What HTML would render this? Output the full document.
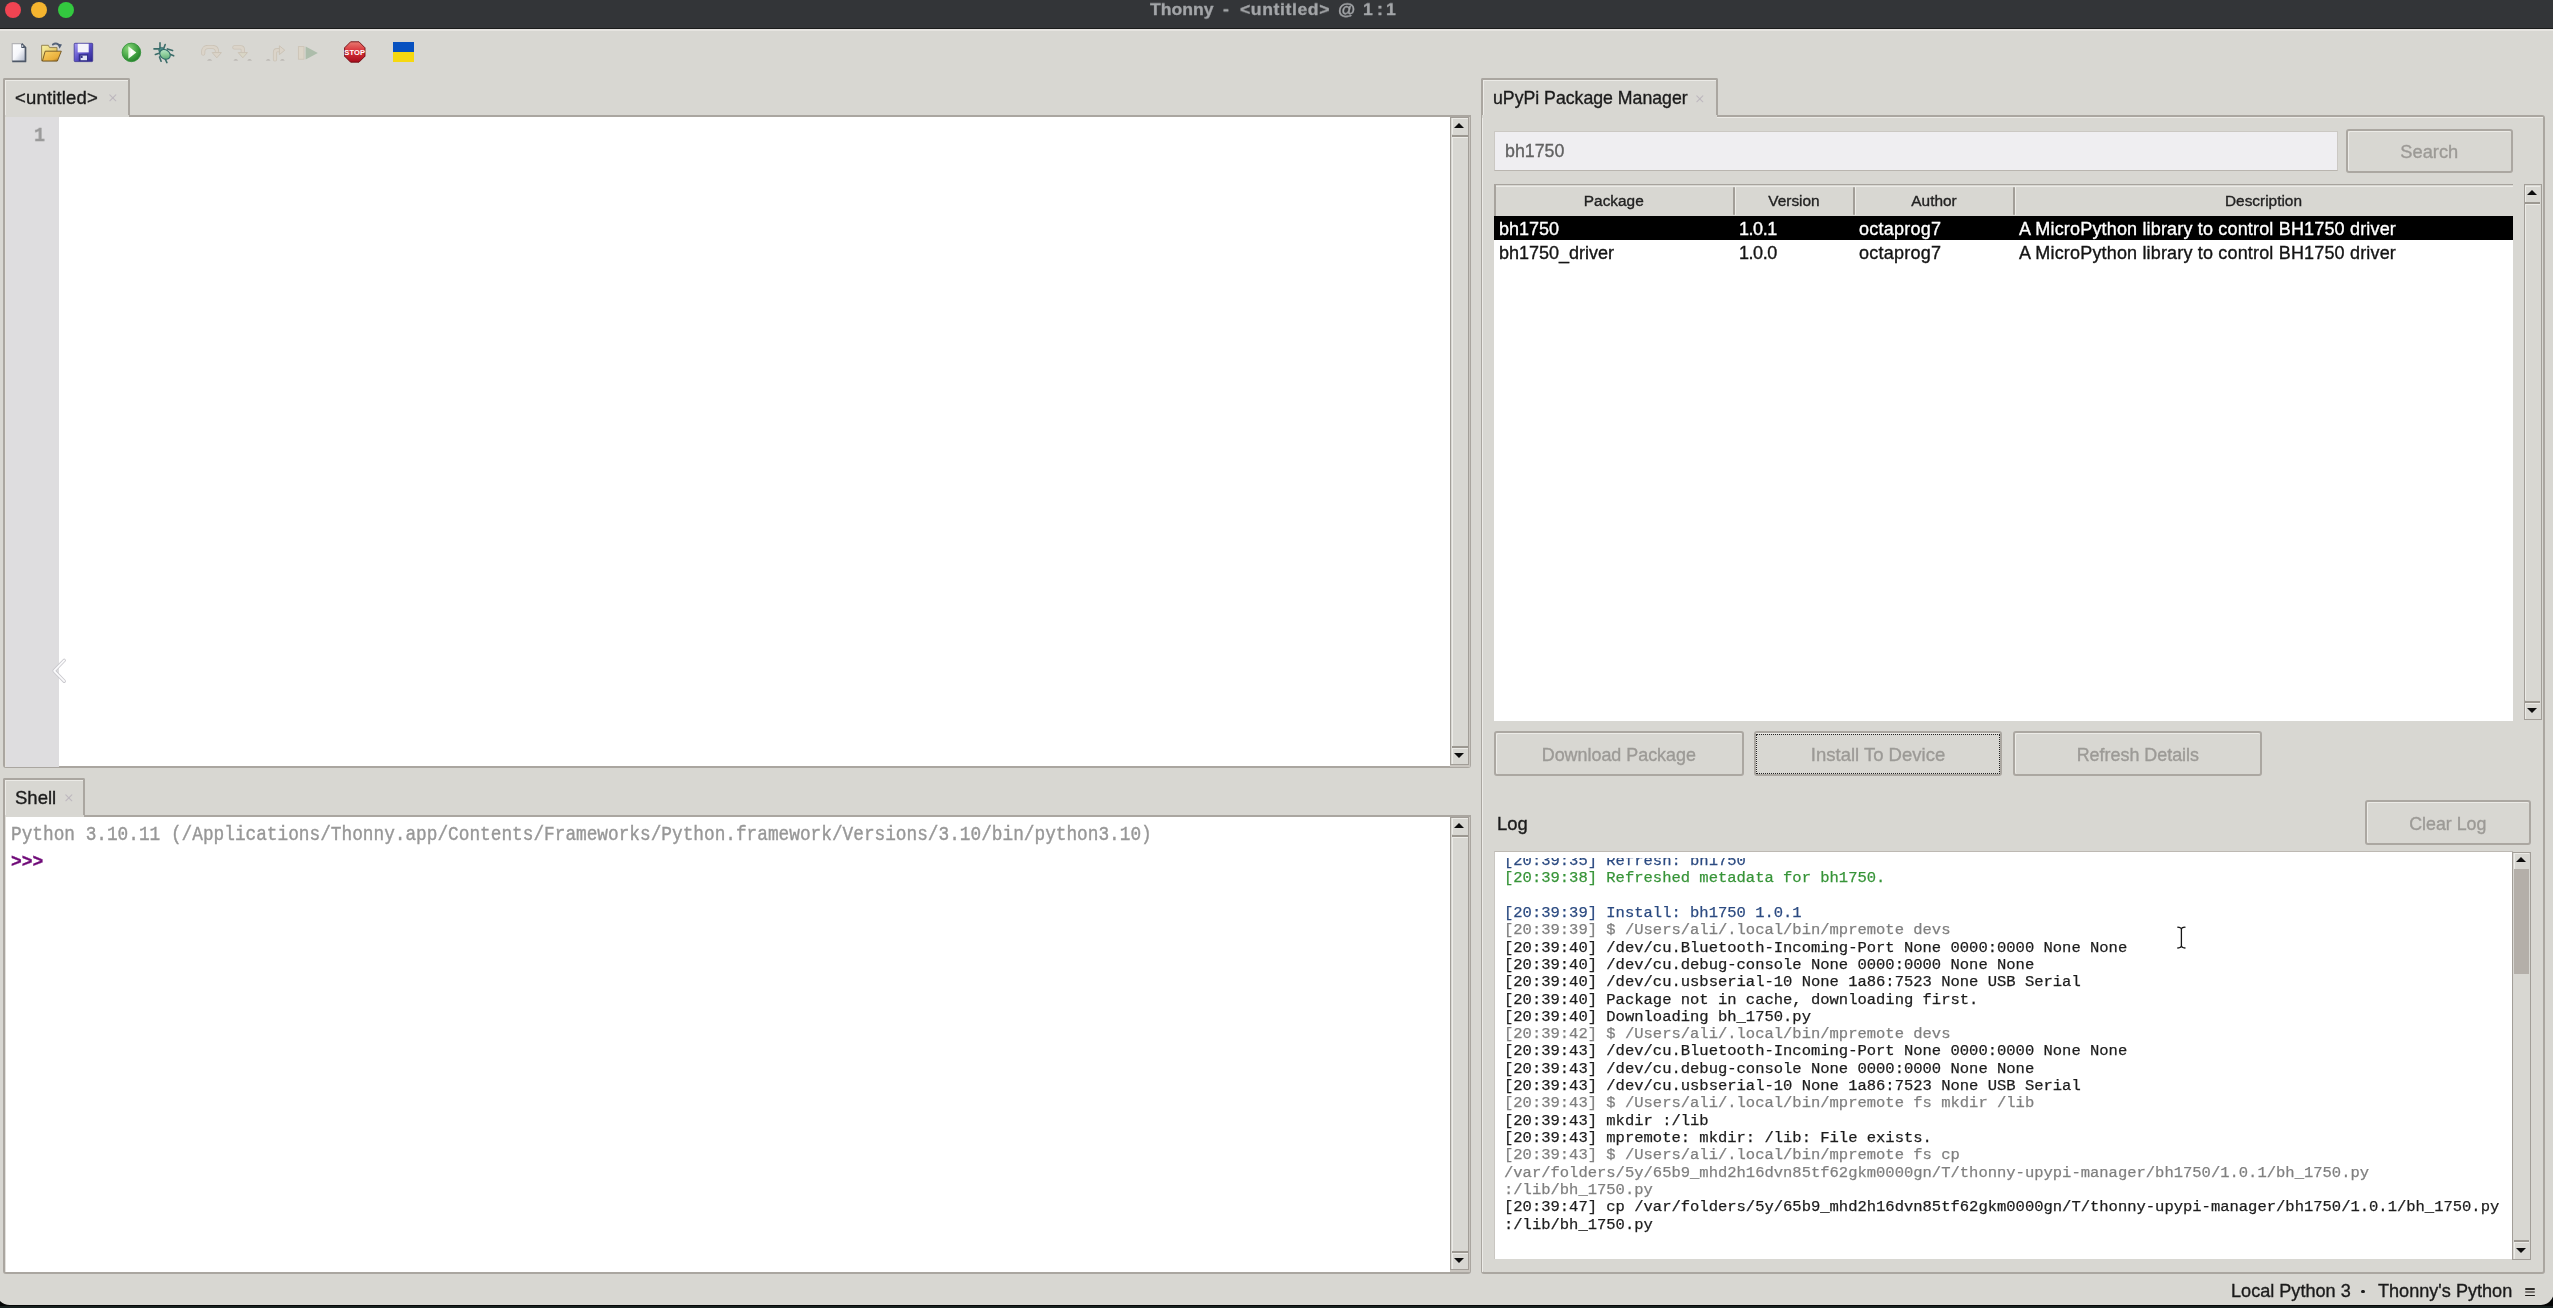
<!DOCTYPE html>
<html><head><meta charset="utf-8">
<style>
*{margin:0;padding:0;box-sizing:border-box}
html,body{width:2553px;height:1308px;overflow:hidden;background:linear-gradient(#050606 0,#050606 1306.5px,#17201f 1306.5px)}
body{font-family:"Liberation Sans",sans-serif;position:relative}
.a{position:absolute}
.t{white-space:pre;line-height:normal;will-change:transform;-webkit-text-stroke:0.35px currentColor}
.mono{font-family:"Liberation Mono",monospace}
#win{position:absolute;left:0;top:0;width:2553px;height:1304.9px;background:#d8d7d2;overflow:hidden}
.sbb{background:#d8d7d2;border-top:1px solid #ecebe7;border-left:1px solid #ecebe7}
.ll{height:17.32px;white-space:pre;-webkit-text-stroke:0.25px currentColor}
.g{color:#7f7f7f}.gr{color:#379438}.bl{color:#2b4a80}.d{color:#1c1c1c}
</style></head><body>
<div id="win">

<div class="a" style="left:0;top:0;width:2553px;height:27.6px;background:#333538"></div>
<div class="a" style="left:0;top:27.6px;width:2553px;height:1.8px;background:#1a1b1b"></div>
<div class="a" style="left:0;top:29.4px;width:2553px;height:1.5px;background:#e6e4e0"></div>
<div class="a" style="left:4.6px;top:1.9px;width:16.2px;height:16.2px;border-radius:50%;background:#f04452"></div>
<div class="a" style="left:30.9px;top:1.9px;width:16.2px;height:16.2px;border-radius:50%;background:#f5b52f"></div>
<div class="a" style="left:57.9px;top:1.9px;width:16.2px;height:16.2px;border-radius:50%;background:#33c93f"></div>
<div class="a t" style="left:1150px;top:-0.6px;font-weight:bold;font-size:17.6px;transform:scaleY(0.9);transform-origin:0 15.8px;color:#a3a5a8">Thonny</div>
<div class="a t" style="left:1223px;top:-0.6px;font-weight:bold;font-size:17.6px;transform:scaleY(0.9);transform-origin:0 15.8px;color:#a3a5a8">-</div>
<div class="a t" style="left:1239.5px;top:-0.6px;font-weight:bold;font-size:17.6px;transform:scaleY(0.9);transform-origin:0 15.8px;letter-spacing:0.6px;color:#a3a5a8">&lt;untitled&gt;</div>
<div class="a t" style="left:1338px;top:-0.6px;font-weight:bold;font-size:17.6px;transform:scaleY(0.9);transform-origin:0 15.8px;color:#a3a5a8">@</div>
<div class="a t" style="left:1362.5px;top:-0.6px;font-weight:bold;font-size:17.6px;transform:scaleY(0.9);transform-origin:0 15.8px;color:#a3a5a8">1</div>
<div class="a t" style="left:1376.7px;top:-0.6px;font-weight:bold;font-size:17.6px;transform:scaleY(0.9);transform-origin:0 15.8px;color:#a3a5a8">:</div>
<div class="a t" style="left:1385.5px;top:-0.6px;font-weight:bold;font-size:17.6px;transform:scaleY(0.9);transform-origin:0 15.8px;color:#a3a5a8">1</div>

<svg class="a" style="left:10px;top:42px" width="18" height="21" viewBox="0 0 18 21">
 <defs><linearGradient id="nf" x1="0" y1="0" x2="1" y2="1"><stop offset="0" stop-color="#ffffff"/><stop offset="0.5" stop-color="#f6f7fb"/><stop offset="1" stop-color="#aab3c6"/></linearGradient></defs>
 <path d="M2.2 1.6H11.6L15.6 5.6V19.4H2.2Z" fill="url(#nf)"/>
 <path d="M2.2 19.2V1.6H11.4" fill="none" stroke="#b3b3b6" stroke-width="1.1"/>
 <path d="M11.6 1.6L15.5 5.5V19.4H2.2" fill="none" stroke="#4d5767" stroke-width="1.7" stroke-linejoin="round"/>
 <path d="M11.2 1.8L15.3 5.9L11.4 5.9Z" fill="#4a5566"/>
 <circle cx="12.6" cy="4.1" r="0.8" fill="#e8ecf4"/>
</svg>
<svg class="a" style="left:40px;top:42px" width="24" height="21" viewBox="0 0 24 21">
 <defs><linearGradient id="of" x1="0" y1="0" x2="1" y2="1"><stop offset="0" stop-color="#f8f2a4"/><stop offset="1" stop-color="#d9b24a"/></linearGradient>
 <linearGradient id="of2" x1="0" y1="0" x2="1" y2="1"><stop offset="0" stop-color="#fbd466"/><stop offset="0.7" stop-color="#e9ae3a"/><stop offset="1" stop-color="#8a5a16"/></linearGradient></defs>
 <path d="M1.6 3.3H8.3L9.6 5.6H17V18.8H1.6Z" fill="url(#of)" stroke="#8d7a4a" stroke-width="0.9"/>
 <path d="M5.2 9.2H21.3L17.4 19H2.4Z" fill="url(#of2)" stroke="#6e5220" stroke-width="0.9"/>
 <path d="M12.9 2.6C14.6 1.2 16.8 1.2 18.4 2.6" fill="none" stroke="#56647a" stroke-width="1.9" stroke-linecap="round"/>
 <path d="M17.2 1.6L22 2.4L19.6 6.8Z" fill="#4f5e76"/>
</svg>
<svg class="a" style="left:73px;top:42px" width="21" height="21" viewBox="0 0 21 21">
 <defs><linearGradient id="sv" x1="0" y1="0" x2="1" y2="1"><stop offset="0" stop-color="#a89cf6"/><stop offset="0.5" stop-color="#5b50c8"/><stop offset="1" stop-color="#2b238c"/></linearGradient></defs>
 <rect x="1.2" y="1.3" width="18.5" height="18.3" rx="0.8" fill="url(#sv)" stroke="#3d3690" stroke-width="0.8"/>
 <rect x="4.7" y="1.8" width="11" height="8.6" fill="#f4f3fb"/>
 <rect x="5.8" y="12.2" width="9.4" height="7" fill="#33308a"/>
 <rect x="7.6" y="13.6" width="6.4" height="4.6" fill="#dfe3f4"/>
 <rect x="7.6" y="13.6" width="2" height="2.4" fill="#33308a"/>
</svg>
<svg class="a" style="left:121px;top:42px" width="21" height="21" viewBox="0 0 21 21">
 <defs><radialGradient id="rn" cx="0.35" cy="0.3" r="0.75"><stop offset="0" stop-color="#8ad67a"/><stop offset="0.6" stop-color="#44a444"/><stop offset="1" stop-color="#23802a"/></radialGradient>
 <linearGradient id="rt" x1="0" y1="0" x2="1" y2="0"><stop offset="0" stop-color="#d8f8d0"/><stop offset="0.4" stop-color="#ffffff"/><stop offset="1" stop-color="#f0fbe8"/></linearGradient></defs>
 <circle cx="10.4" cy="10.4" r="9.3" fill="url(#rn)" stroke="#2e8f36" stroke-width="0.8"/>
 <path d="M7.3 4.2L15.3 10.4L7.3 16.8Z" fill="url(#rt)"/>
</svg>
<svg class="a" style="left:152px;top:41px" width="24" height="24" viewBox="0 0 24 24">
 <defs><linearGradient id="bg1" x1="0" y1="0" x2="1" y2="1"><stop offset="0" stop-color="#c8ecd8"/><stop offset="0.5" stop-color="#8fcf9c"/><stop offset="1" stop-color="#4c9a6a"/></linearGradient></defs>
 <g stroke="#3b6c69" stroke-width="1.6" stroke-linecap="round" fill="none">
  <path d="M8 1.9V7.9"/><path d="M13.2 3.5L11.9 7.1"/><path d="M2 7.9H7.8"/><path d="M3.4 13.4L7.8 12"/>
  <path d="M15.4 7.9L20.6 9.6"/><path d="M17.4 13.1L21.7 14.8"/><path d="M7.5 15.9L9.1 20.3"/><path d="M13.2 18L14.9 21.6"/>
 </g>
 <circle cx="9.6" cy="9.2" r="2.8" fill="#4a8a86" stroke="#2f6664" stroke-width="0.8"/>
 <ellipse cx="13" cy="13.4" rx="5.6" ry="4.5" transform="rotate(35 13 13.4)" fill="url(#bg1)" stroke="#2e6a68" stroke-width="1.1"/>
</svg>
<svg class="a" style="left:200px;top:45.3px" width="24" height="17" viewBox="0 0 24 17">
 <path d="M3.2 8.6V6.8C3.2 3.6 5.2 2 8 2H12.4C15.6 2 17 3.6 17 6.8V8" fill="none" stroke="#cbc3b6" stroke-width="4.2" stroke-linecap="round"/>
 <path d="M3.2 8.6V6.8C3.2 3.6 5.2 2 8 2H12.4C15.6 2 17 3.6 17 6.8V8" fill="none" stroke="#dbd4c9" stroke-width="2.6" stroke-linecap="round"/>
 <path d="M12.2 7.6H21.4L16.8 12.8Z" fill="#dbd4c9" stroke="#cbc3b6" stroke-width="1" stroke-linejoin="round"/>
 <path d="M7 15.6Q9.6 12.8 12.2 15.6Z" fill="#b2aea9"/>
</svg>
<svg class="a" style="left:232px;top:45.3px" width="24" height="17" viewBox="0 0 24 17">
 <path d="M2.4 2.4H8.6C10 2.4 10.8 3.2 10.8 4.6V8" fill="none" stroke="#cbc3b6" stroke-width="4.2" stroke-linecap="round"/>
 <path d="M2.4 2.4H8.6C10 2.4 10.8 3.2 10.8 4.6V8" fill="none" stroke="#dbd4c9" stroke-width="2.6" stroke-linecap="round"/>
 <path d="M6.2 7.6H15.4L10.8 12.8Z" fill="#d9d6c6" stroke="#cbc3b6" stroke-width="1" stroke-linejoin="round"/>
 <path d="M1.4 15.6Q3.8 12.8 6.2 15.6Z" fill="#b2aea9"/>
 <path d="M15.2 15.6Q17.6 12.8 20 15.6Z" fill="#b2aea9"/>
</svg>
<svg class="a" style="left:264px;top:45.3px" width="24" height="17" viewBox="0 0 24 17">
 <path d="M11 14.4V7.4C11 6 11.8 5.2 13.2 5.2H16" fill="none" stroke="#cbc3b6" stroke-width="4.2" stroke-linecap="round"/>
 <path d="M11 14.4V7.4C11 6 11.8 5.2 13.2 5.2H16" fill="none" stroke="#dbd4c9" stroke-width="2.6" stroke-linecap="round"/>
 <path d="M15.4 0.8L20.8 5.2L15.4 9.6Z" fill="#dbd4c9" stroke="#cbc3b6" stroke-width="1" stroke-linejoin="round"/>
 <path d="M1.8 15.6Q4.2 12.8 6.6 15.6Z" fill="#b2aea9"/>
 <path d="M16 15.6Q18.4 12.8 20.8 15.6Z" fill="#b2aea9"/>
</svg>
<svg class="a" style="left:297px;top:44.6px" width="22" height="16" viewBox="0 0 22 16">
 <rect x="1.4" y="1.6" width="5.6" height="12.6" fill="#dcd5c8" stroke="#ccc4b6" stroke-width="0.9"/>
 <path d="M8.6 1.4L20.8 7.9L8.6 14.4Z" fill="#adbdab"/>
</svg>
<svg class="a" style="left:343px;top:40px" width="24" height="24" viewBox="0 0 24 24">
 <defs><linearGradient id="st" x1="0" y1="0" x2="0" y2="1"><stop offset="0" stop-color="#e87a70"/><stop offset="0.45" stop-color="#d8333a"/><stop offset="1" stop-color="#a80d1c"/></linearGradient></defs>
 <path d="M7.6 1.8H16L22 7.8V16.2L16 22.2H7.6L1.6 16.2V7.8Z" fill="url(#st)" stroke="#6e0b12" stroke-width="0.9"/>
 <text x="11.8" y="14.6" text-anchor="middle" font-family="Liberation Sans" font-weight="bold" font-size="7.6" fill="#fff" letter-spacing="0.1">STOP</text>
</svg>
<div class="a" style="left:392.9px;top:41.8px;width:21.1px;height:10.4px;background:#0751c0"></div>
<div class="a" style="left:392.9px;top:52.2px;width:21.1px;height:10.3px;background:#f6d80f"></div>

<div class="a" style="left:3.0px;top:78px;width:126.8px;height:39px;background:#d8d7d2;border:2px solid #aaa6a0;border-bottom:none;border-radius:2px 2px 0 0"></div>
<div class="a" style="left:5.0px;top:80px;width:122.8px;height:37px;border-left:1px solid #ecebe7;border-top:1px solid #ecebe7"></div>
<div class="a t" style="left:15.3px;top:87.0px;font-size:18.5px;color:#1b1b1b"><span style='letter-spacing:0.17px'>&lt;untitled&gt;</span></div>
<svg class="a" style="left:108.8px;top:93.9px" width="8" height="8" viewBox="0 0 8 8"><path d="M0.8 0.8L6.8 6.8M6.8 0.8L0.8 6.8" stroke="#b5aeb8" stroke-width="1.05" stroke-linecap="round" opacity="0.75"/></svg>
<div class="a" style="left:3.0px;top:115.3px;width:1468.2px;height:653px;border:2px solid #aaa6a0;border-radius:0 0 3px 3px;background:#fff"></div>
<div class="a" style="left:4.8px;top:116.8px;width:1.1px;height:650px;background:#e3e1dd"></div>
<div class="a" style="left:4.8px;top:115px;width:124px;height:2.4px;background:#d8d7d2"></div>
<div class="a" style="left:5.9px;top:117.3px;width:52.9px;height:649.5px;background:#dedddf"></div>
<div class="a t mono" style="left:34px;top:124.4px;font-size:20.8px;font-weight:bold;color:#9a9a9a;transform:scaleX(0.88);transform-origin:0 0">1</div>
<div class="a" style="left:1450.2px;top:116.8px;width:19.8px;height:650.3px;background:#c9c5bf"></div>
<div class="a" style="left:1450.2px;top:117px;width:18.7px;height:648.3px;background:#d8d7d2;border:1.3px solid #a29e98"></div>
<div class="a" style="left:1451.5px;top:118.3px;width:16.099999999999998px;height:16.2px;border-top:1px solid #ecebe7;border-left:1px solid #ecebe7"></div>
<div class="a" style="left:1451.5px;top:747.8px;width:16.099999999999998px;height:16.2px;border-top:1px solid #ecebe7;border-left:1px solid #ecebe7"></div>
<div class="a" style="left:1453.75px;top:122.55000000000001px;width:0;height:0;border-left:5px solid transparent;border-right:5px solid transparent;border-bottom:5.7px solid #0d0d0d"></div>
<div class="a" style="left:1453.75px;top:753.15px;width:0;height:0;border-left:5px solid transparent;border-right:5px solid transparent;border-top:5.7px solid #0d0d0d"></div>
<div class="a" style="left:1451.5px;top:134.5px;width:16.099999999999998px;height:2px;background:#9c9891"></div>
<div class="a" style="left:1451.5px;top:745.8px;width:16.099999999999998px;height:2px;background:#9c9891"></div>
<div class="a" style="left:1451.5px;top:136.5px;width:16.099999999999998px;height:609.3px;border-top:1px solid #ecebe7;border-left:1px solid #ecebe7"></div>
<div class="a" style="left:3.0px;top:778px;width:82.3px;height:39px;background:#d8d7d2;border:2px solid #aaa6a0;border-bottom:none;border-radius:2px 2px 0 0"></div>
<div class="a" style="left:5.0px;top:780px;width:78.3px;height:37px;border-left:1px solid #ecebe7;border-top:1px solid #ecebe7"></div>
<div class="a t" style="left:15px;top:787.2px;font-size:18.5px;color:#1b1b1b">Shell</div>
<svg class="a" style="left:64.8px;top:793.7px" width="8" height="8" viewBox="0 0 8 8"><path d="M0.8 0.8L6.8 6.8M6.8 0.8L0.8 6.8" stroke="#b5aeb8" stroke-width="1.05" stroke-linecap="round" opacity="0.75"/></svg>
<div class="a" style="left:3.0px;top:815.3px;width:1468.2px;height:458.5px;border:2px solid #aaa6a0;border-radius:0 0 3px 3px;background:#fff"></div>
<div class="a" style="left:4.8px;top:816.8px;width:1.1px;height:455.5px;background:#e3e1dd"></div>
<div class="a" style="left:4.8px;top:815px;width:79.5px;height:2.4px;background:#d8d7d2"></div>
<div class="a t mono" style="left:11.3px;top:825.3px;font-size:17.78px;color:#979797;transform:scaleY(1.1);transform-origin:0 14.8px">Python 3.10.11 (/Applications/Thonny.app/Contents/Frameworks/Python.framework/Versions/3.10/bin/python3.10)</div>
<div class="a t mono" style="left:11px;top:852.3px;font-size:17.75px;font-weight:bold;color:#6f0a78;transform:scaleX(1.01);transform-origin:0 0">&gt;&gt;&gt;</div>
<div class="a" style="left:1450.2px;top:816.8px;width:19.8px;height:455.5px;background:#c9c5bf"></div>
<div class="a" style="left:1450.2px;top:817px;width:18.7px;height:453.4px;background:#d8d7d2;border:1.3px solid #a29e98"></div>
<div class="a" style="left:1451.5px;top:818.3px;width:16.099999999999998px;height:16.2px;border-top:1px solid #ecebe7;border-left:1px solid #ecebe7"></div>
<div class="a" style="left:1451.5px;top:1252.9px;width:16.099999999999998px;height:16.2px;border-top:1px solid #ecebe7;border-left:1px solid #ecebe7"></div>
<div class="a" style="left:1453.75px;top:822.55px;width:0;height:0;border-left:5px solid transparent;border-right:5px solid transparent;border-bottom:5.7px solid #0d0d0d"></div>
<div class="a" style="left:1453.75px;top:1258.2500000000002px;width:0;height:0;border-left:5px solid transparent;border-right:5px solid transparent;border-top:5.7px solid #0d0d0d"></div>
<div class="a" style="left:1451.5px;top:834.5px;width:16.099999999999998px;height:2px;background:#9c9891"></div>
<div class="a" style="left:1451.5px;top:1250.9px;width:16.099999999999998px;height:2px;background:#9c9891"></div>
<div class="a" style="left:1451.5px;top:836.5px;width:16.099999999999998px;height:414.4px;border-top:1px solid #ecebe7;border-left:1px solid #ecebe7"></div>
<div class="a" style="left:1480.6px;top:78px;width:237.5px;height:39px;background:#d8d7d2;border:2px solid #aaa6a0;border-bottom:none;border-radius:2px 2px 0 0"></div>
<div class="a" style="left:1482.6px;top:80px;width:233.5px;height:37px;border-left:1px solid #ecebe7;border-top:1px solid #ecebe7"></div>
<div class="a t" style="left:1493.3px;top:87.9px;font-size:17.7px;color:#1b1b1b">uPyPi Package Manager</div>
<svg class="a" style="left:1696.3px;top:94.5px" width="8" height="8" viewBox="0 0 8 8"><path d="M0.8 0.8L6.8 6.8M6.8 0.8L0.8 6.8" stroke="#b5aeb8" stroke-width="1.05" stroke-linecap="round" opacity="0.75"/></svg>
<div class="a" style="left:1480.6px;top:115.3px;width:1064.6px;height:1158.5px;border:2px solid #aaa6a0;border-radius:0 3px 3px 3px"></div>
<div class="a" style="left:1482.1px;top:116.8px;width:1061px;height:1155px;border-left:1px solid #ecebe7;border-top:1px solid #ecebe7"></div>
<div class="a" style="left:1482.1px;top:115.3px;width:234.5px;height:2.5px;background:#d8d7d2"></div>
<div class="a" style="left:1494.4px;top:131.3px;width:843.5px;height:39.5px;background:#efeef1;border:1px solid #cbc8c3;border-bottom:1px solid #b9b5af"></div>
<div class="a t" style="left:1505px;top:141.2px;font-size:17.8px;color:#626262">bh1750</div>
<div class="a" style="left:2346px;top:128.7px;width:166.5px;height:44.8px;background:#d8d7d2;border:2px solid #aba7a1;border-radius:3px"></div>
<div class="a" style="left:2348px;top:130.7px;width:162.5px;height:40.8px;border-top:1px solid #ecebe7;border-left:1px solid #ecebe7;border-radius:2px"></div>
<div class="a t" style="left:2346px;top:140.5px;width:166.5px;text-align:center;font-size:18.3px;color:#9c9a96">Search</div>
<div class="a" style="left:1494.4px;top:216px;width:1018.6px;height:504.5px;background:#fff"></div>
<div class="a" style="left:1494.4px;top:184.3px;width:1018.6px;height:31.7px;background:#d8d7d2;border-top:1.4px solid #a7a39d"></div>
<div class="a" style="left:1494.4px;top:185.7px;width:1018.6px;height:1px;background:#ecebe7"></div>
<div class="a" style="left:1494.4px;top:184.3px;width:1.4px;height:31.7px;background:#a7a39d"></div>
<div class="a t" style="left:1494.4px;top:191.5px;width:239.5999999999999px;text-align:center;font-size:15.4px;color:#222">Package</div>
<div class="a t" style="left:1734px;top:191.5px;width:120px;text-align:center;font-size:15.4px;color:#222">Version</div>
<div class="a" style="left:1733.2px;top:186.6px;width:1.9px;height:28.7px;background:#a29e98;border-radius:1px"></div>
<div class="a" style="left:1735.1px;top:186.6px;width:1px;height:28.7px;background:#ecebe7"></div>
<div class="a t" style="left:1854px;top:191.5px;width:160px;text-align:center;font-size:15.4px;color:#222">Author</div>
<div class="a" style="left:1853.2px;top:186.6px;width:1.9px;height:28.7px;background:#a29e98;border-radius:1px"></div>
<div class="a" style="left:1855.1px;top:186.6px;width:1px;height:28.7px;background:#ecebe7"></div>
<div class="a t" style="left:2014px;top:191.5px;width:499px;text-align:center;font-size:15.4px;color:#222">Description</div>
<div class="a" style="left:2013.2px;top:186.6px;width:1.9px;height:28.7px;background:#a29e98;border-radius:1px"></div>
<div class="a" style="left:2015.1px;top:186.6px;width:1px;height:28.7px;background:#ecebe7"></div>
<div class="a" style="left:1494.4px;top:216.2px;width:1018.6px;height:24px;background:#000"></div>
<div class="a t" style="left:1499.4px;top:219.2px;font-size:18px;letter-spacing:0px;color:#fff">bh1750</div>
<div class="a t" style="left:1739.0px;top:219.2px;font-size:18px;letter-spacing:-0.45px;color:#fff">1.0.1</div>
<div class="a t" style="left:1859.0px;top:219.2px;font-size:18px;letter-spacing:0.25px;color:#fff">octaprog7</div>
<div class="a t" style="left:2019.0px;top:219.2px;font-size:18px;letter-spacing:0.17px;color:#fff">A MicroPython library to control BH1750 driver</div>
<div class="a t" style="left:1499.4px;top:243.2px;font-size:18px;letter-spacing:0px;color:#141414">bh1750_driver</div>
<div class="a t" style="left:1739.0px;top:243.2px;font-size:18px;letter-spacing:-0.45px;color:#141414">1.0.0</div>
<div class="a t" style="left:1859.0px;top:243.2px;font-size:18px;letter-spacing:0.25px;color:#141414">octaprog7</div>
<div class="a t" style="left:2019.0px;top:243.2px;font-size:18px;letter-spacing:0.17px;color:#141414">A MicroPython library to control BH1750 driver</div>
<div class="a" style="left:2523.5px;top:184.3px;width:18.3px;height:535.7px;background:#d8d7d2;border:1.3px solid #a29e98"></div>
<div class="a" style="left:2524.8px;top:185.60000000000002px;width:15.700000000000001px;height:16.2px;border-top:1px solid #ecebe7;border-left:1px solid #ecebe7"></div>
<div class="a" style="left:2524.8px;top:702.5px;width:15.700000000000001px;height:16.2px;border-top:1px solid #ecebe7;border-left:1px solid #ecebe7"></div>
<div class="a" style="left:2526.85px;top:189.85000000000002px;width:0;height:0;border-left:5px solid transparent;border-right:5px solid transparent;border-bottom:5.7px solid #0d0d0d"></div>
<div class="a" style="left:2526.85px;top:707.85px;width:0;height:0;border-left:5px solid transparent;border-right:5px solid transparent;border-top:5.7px solid #0d0d0d"></div>
<div class="a" style="left:2524.8px;top:201.8px;width:15.700000000000001px;height:2px;background:#9c9891"></div>
<div class="a" style="left:2524.8px;top:700.5px;width:15.700000000000001px;height:2px;background:#9c9891"></div>
<div class="a" style="left:2524.8px;top:203.8px;width:15.700000000000001px;height:496.70000000000005px;border-top:1px solid #ecebe7;border-left:1px solid #ecebe7"></div>
<div class="a" style="left:1494.4px;top:731.2px;width:249.7px;height:45.3px;background:#d8d7d2;border:2px solid #aba7a1;border-radius:3px"></div>
<div class="a" style="left:1496.4px;top:733.2px;width:245.7px;height:41.3px;border-top:1px solid #ecebe7;border-left:1px solid #ecebe7;border-radius:2px"></div>
<div class="a t" style="left:1494.4px;top:744.9px;width:249.7px;text-align:center;font-size:17.9px;color:#9c9a96">Download Package</div>
<div class="a" style="left:1754.1px;top:731.2px;width:248px;height:45.3px;background:#d8d7d2;border:2px solid #aba7a1;border-radius:3px"></div>
<div class="a" style="left:1756.1px;top:733.2px;width:244px;height:41.3px;border-top:1px solid #ecebe7;border-left:1px solid #ecebe7;border-radius:2px"></div>
<div class="a" style="left:1756.1px;top:734.2px;width:244px;height:40.3px;border:1.6px dotted #222"></div>
<div class="a t" style="left:1754.1px;top:744.3px;width:248px;text-align:center;font-size:18.5px;color:#9c9a96">Install To Device</div>
<div class="a" style="left:2012.5px;top:731.2px;width:249.7px;height:45.3px;background:#d8d7d2;border:2px solid #aba7a1;border-radius:3px"></div>
<div class="a" style="left:2014.5px;top:733.2px;width:245.7px;height:41.3px;border-top:1px solid #ecebe7;border-left:1px solid #ecebe7;border-radius:2px"></div>
<div class="a t" style="left:2012.5px;top:744.9px;width:249.7px;text-align:center;font-size:17.9px;color:#9c9a96">Refresh Details</div>
<div class="a t" style="left:1496.5px;top:813.4px;font-size:18.4px;color:#1b1b1b">Log</div>
<div class="a" style="left:2365px;top:800.4px;width:165.6px;height:45.1px;background:#d8d7d2;border:2px solid #aba7a1;border-radius:3px"></div>
<div class="a" style="left:2367px;top:802.4px;width:161.6px;height:41.1px;border-top:1px solid #ecebe7;border-left:1px solid #ecebe7;border-radius:2px"></div>
<div class="a t" style="left:2365px;top:813.6px;width:165.6px;text-align:center;font-size:17.8px;color:#9c9a96">Clear Log</div>
<div class="a" style="left:1494.3px;top:851.3px;width:1018.5px;height:407.5px;background:#fff;border-top:1px solid #bdb9b3;border-left:1px solid #c9c6c1"></div>
<div class="a" style="left:1495px;top:858.0px;width:1017px;height:400px;overflow:hidden"><div class="a mono" style="will-change:transform;left:8.8px;top:-5.2999999999999545px;font-size:15.5px;line-height:17.32px"><div class="ll bl">[20:39:35] Refresh: bh1750</div><div class="ll gr">[20:39:38] Refreshed metadata for bh1750.</div><div class="ll ">&nbsp;</div><div class="ll bl">[20:39:39] Install: bh1750 1.0.1</div><div class="ll g">[20:39:39] $ /Users/ali/.local/bin/mpremote devs</div><div class="ll d">[20:39:40] /dev/cu.Bluetooth-Incoming-Port None 0000:0000 None None</div><div class="ll d">[20:39:40] /dev/cu.debug-console None 0000:0000 None None</div><div class="ll d">[20:39:40] /dev/cu.usbserial-10 None 1a86:7523 None USB Serial</div><div class="ll d">[20:39:40] Package not in cache, downloading first.</div><div class="ll d">[20:39:40] Downloading bh_1750.py</div><div class="ll g">[20:39:42] $ /Users/ali/.local/bin/mpremote devs</div><div class="ll d">[20:39:43] /dev/cu.Bluetooth-Incoming-Port None 0000:0000 None None</div><div class="ll d">[20:39:43] /dev/cu.debug-console None 0000:0000 None None</div><div class="ll d">[20:39:43] /dev/cu.usbserial-10 None 1a86:7523 None USB Serial</div><div class="ll g">[20:39:43] $ /Users/ali/.local/bin/mpremote fs mkdir /lib</div><div class="ll d">[20:39:43] mkdir :/lib</div><div class="ll d">[20:39:43] mpremote: mkdir: /lib: File exists.</div><div class="ll g">[20:39:43] $ /Users/ali/.local/bin/mpremote fs cp</div><div class="ll g">/var/folders/5y/65b9_mhd2h16dvn85tf62gkm0000gn/T/thonny-upypi-manager/bh1750/1.0.1/bh_1750.py</div><div class="ll g">:/lib/bh_1750.py</div><div class="ll d">[20:39:47] cp /var/folders/5y/65b9_mhd2h16dvn85tf62gkm0000gn/T/thonny-upypi-manager/bh1750/1.0.1/bh_1750.py</div><div class="ll d">:/lib/bh_1750.py</div></div></div>
<div class="a" style="left:2512.4px;top:851.7px;width:18.3px;height:408.2px;background:#d8d7d2;border:1.3px solid #a29e98"></div>
<div class="a" style="left:2513.7000000000003px;top:853.0px;width:15.700000000000001px;height:16.2px;border-top:1px solid #ecebe7;border-left:1px solid #ecebe7"></div>
<div class="a" style="left:2513.7000000000003px;top:1242.4px;width:15.700000000000001px;height:16.2px;border-top:1px solid #ecebe7;border-left:1px solid #ecebe7"></div>
<div class="a" style="left:2515.75px;top:857.25px;width:0;height:0;border-left:5px solid transparent;border-right:5px solid transparent;border-bottom:5.7px solid #0d0d0d"></div>
<div class="a" style="left:2515.75px;top:1247.7500000000002px;width:0;height:0;border-left:5px solid transparent;border-right:5px solid transparent;border-top:5.7px solid #0d0d0d"></div>
<div class="a" style="left:2513.7000000000003px;top:869.2px;width:15.700000000000001px;height:105.29999999999995px;background:#b4afa9"></div>
<div class="a" style="left:2513.7000000000003px;top:1240.4px;width:15.700000000000001px;height:2px;background:#9c9891"></div>
<svg class="a" style="left:2176px;top:925px" width="11" height="25" viewBox="0 0 11 25"><path d="M1.8 2.2C3.6 2.2 5.4 2.8 5.4 4.6V20.6C5.4 22.4 3.6 23 1.8 23M9 2.2C7.2 2.2 5.4 2.8 5.4 4.6M9 23C7.2 23 5.4 22.4 5.4 20.6" fill="none" stroke="#fff" stroke-width="3" stroke-linecap="round"/><path d="M1.8 2.2C3.6 2.2 5.4 2.8 5.4 4.6V20.6C5.4 22.4 3.6 23 1.8 23M9 2.2C7.2 2.2 5.4 2.8 5.4 4.6M9 23C7.2 23 5.4 22.4 5.4 20.6" fill="none" stroke="#151515" stroke-width="1.3" stroke-linecap="round"/></svg>
<svg class="a" style="left:48px;top:655px" width="22" height="32" viewBox="0 0 22 32"><path d="M16.2 5.4L6.1 15.8L16.2 26.2" fill="none" stroke="#c9c8cd" stroke-width="3.4" stroke-linecap="round" stroke-linejoin="round"/><path d="M16.2 5.4L6.1 15.8L16.2 26.2" fill="none" stroke="#fbfbfc" stroke-width="1.7" stroke-linecap="round" stroke-linejoin="round"/></svg>
<div class="a t" style="left:2230.5px;top:1280.6px;font-size:18.1px;color:#1b1b1b">Local Python 3</div>
<div class="a" style="left:2361.3px;top:1289.6px;width:3.8px;height:3.8px;border-radius:50%;background:#1b1b1b"></div>
<div class="a t" style="left:2378px;top:1280.6px;font-size:18.1px;color:#1b1b1b">Thonny's Python</div>
<div class="a" style="left:2524.8px;top:1288px;width:10.6px;height:1.8px;border-radius:1px;background:#2e2c2a"></div>
<div class="a" style="left:2524.8px;top:1291.3px;width:10.6px;height:1.9px;border-radius:1px;background:#77736f"></div>
<div class="a" style="left:2524.8px;top:1294.8px;width:10.6px;height:1.5px;border-radius:1px;background:#1e1c1a"></div>
<svg class="a" style="left:0;top:0" width="2553" height="1308" viewBox="0 0 2553 1308"><path d="M0 1300.9A14 14 0 0 0 9.9 1304.9H0Z" fill="#050606"/><path d="M2553 1287.4A12.9 12.9 0 0 1 2541 1304.9H2553Z" fill="#050606"/></svg>
</div>
</body></html>
